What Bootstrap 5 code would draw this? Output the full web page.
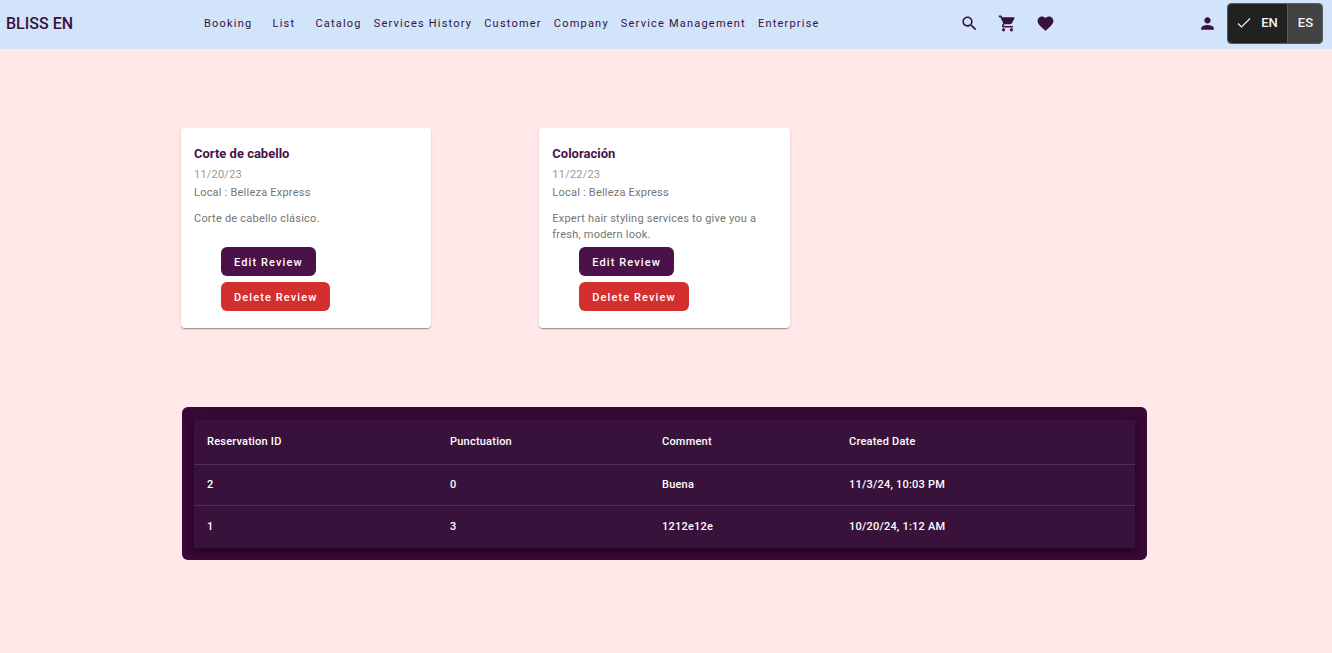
<!DOCTYPE html>
<html lang="en">
<head>
<meta charset="utf-8">
<meta name="viewport" content="width=device-width, initial-scale=1">
<title>Bliss</title>
<link href="https://cdn.jsdelivr.net/npm/bootstrap@5.3.0/dist/css/bootstrap.min.css" rel="stylesheet">
<style>
  :root { --plum: #38123b; --grape: #4b1149; }
  body { font-family: Roboto, "Liberation Sans", sans-serif; font-size: 11px; line-height: 16px; background: #ffe8e7; color: var(--plum); }
  .topbar { background: #d2e4fa; min-height: 49px; padding: 3px 9px 5px 6px; }
  .topbar a, .tool { color: var(--plum); }
  .brand { font-size: 16px; line-height: 24px; font-weight: 500; width: 192px; }
  .menu-link { min-width: 51px; padding: 6px; text-align: center; letter-spacing: 0.11em; }
  .tool { width: 38px; height: 38px; padding: 0 0 2px; border: 0; }
  .tools-main { margin-right: 124px; }
  .account { margin-right: 1px; }
  .lang { border: 1px solid #5b5b5b; border-radius: 4px; overflow: hidden; height: 41px; }
  .lang button { border: 0; background: #424242; color: #f5f5f5; font-size: 13px; font-weight: 500; padding: 0 9px 2px 10px; }
  .lang button.chosen { background: #212121; border-right: 1px solid #5b5b5b; gap: 10px; padding-left: 9px; }
  .page { padding: 79px 184px 24px 181px; }
  .reviews { --bs-gutter-x: 108px; --bs-gutter-y: 24px; margin-bottom: 79px; }
  .review { min-height: 200px; padding: 17px 13px; border: 0; border-radius: 4px; color: #757575; letter-spacing: 0.02em;
    box-shadow: 0 2px 1px -1px rgba(0,0,0,.2), 0 1px 1px rgba(0,0,0,.14), 0 1px 3px rgba(0,0,0,.12); }
  .review h2 { font-size: 13px; line-height: 18px; font-weight: 700; color: var(--grape); margin-bottom: 4px; letter-spacing: 0; }
  .review time { color: #999; line-height: 16px; margin-bottom: 2px; }
  .place { margin-bottom: 10px; }
  .about { min-height: 32px; margin-bottom: 4px; }
  .actions { gap: 6px; padding-left: 27px; }
  .act { font-size: 11px; line-height: 17px; font-weight: 500; letter-spacing: 0.1em; color: #fff; border: 0; border-radius: 6px; padding: 7px 13px 5px; }
  .act-edit { background: var(--grape); }
  .act-delete { background: #d32f2f; }
  .panel { background: #380836; border-radius: 6px; padding: 13px 12px 12px; margin: 0 1px; }
  .log { color: #fff; background: var(--plum); letter-spacing: 0.02em; box-shadow: 0 4px 4px -2px rgba(0,0,0,.2), 0 5px 6px rgba(0,0,0,.14), 0 1px 11px rgba(0,0,0,.12); table-layout: fixed; }
  .log th, .log td { padding: 0 13px; height: 41px; font-weight: 500; border-bottom: 1px solid #523056; }
  .log td { padding-top: 1px; }
  .log th { height: 44px; }
  .log tbody tr:last-child td { border: 0; height: 43px; }
  .c-id { width: 243px; } .c-score { width: 212px; } .c-note { width: 187px; }
  @media (max-width: 991px) { .page { padding: 32px 24px; } .tools-main { margin-right: 0; } .brand, .log th { width: auto; } }
</style>
</head>
<body>
<header class="topbar d-flex flex-wrap align-items-center">
  <a class="brand text-decoration-none" href="#">BLISS EN</a>
  <nav class="d-flex flex-wrap" aria-label="Main">
    <a class="menu-link text-decoration-none" href="#">Booking</a>
    <a class="menu-link text-decoration-none" href="#">List</a>
    <a class="menu-link text-decoration-none" href="#">Catalog</a>
    <a class="menu-link text-decoration-none" href="#">Services History</a>
    <a class="menu-link text-decoration-none" href="#">Customer</a>
    <a class="menu-link text-decoration-none" href="#">Company</a>
    <a class="menu-link text-decoration-none" href="#">Service Management</a>
    <a class="menu-link text-decoration-none" href="#">Enterprise</a>
  </nav>
  <div class="tools-main d-flex ms-auto">
    <button class="tool btn" aria-label="Search"><svg width="19" height="19" viewBox="0 0 24 24" fill="currentColor"><path d="M15.5 14h-.79l-.28-.27C15.41 12.59 16 11.11 16 9.5 16 5.91 13.09 3 9.5 3S3 5.91 3 9.5 5.91 16 9.5 16c1.61 0 3.09-.59 4.23-1.57l.27.28v.79l5 4.99L20.49 19l-4.99-5zm-6 0C7.01 14 5 11.99 5 9.5S7.01 5 9.5 5 14 7.01 14 9.5 11.99 14 9.5 14z"/></svg></button>
    <button class="tool btn" aria-label="Cart"><svg width="19" height="19" viewBox="0 0 24 24" fill="currentColor"><path d="M7 18c-1.1 0-1.99.9-1.99 2S5.9 22 7 22s2-.9 2-2-.9-2-2-2zM1 2v2h2l3.6 7.59-1.35 2.45c-.16.28-.25.61-.25.96 0 1.1.9 2 2 2h12v-2H7.42c-.14 0-.25-.11-.25-.25l.03-.12.9-1.63h7.45c.75 0 1.41-.41 1.75-1.03l3.58-6.49c.08-.14.12-.31.12-.48 0-.55-.45-1-1-1H5.21l-.94-2H1zm16 16c-1.1 0-1.99.9-1.99 2s.89 2 1.99 2 2-.9 2-2-.9-2-2-2z"/></svg></button>
    <button class="tool btn" aria-label="Favorites"><svg width="19" height="19" viewBox="0 0 24 24" fill="currentColor"><path d="M12 21.35l-1.45-1.32C5.4 15.36 2 12.28 2 8.5 2 5.42 4.42 3 7.5 3c1.74 0 3.41.81 4.5 2.09C13.09 3.81 14.76 3 16.5 3 19.58 3 22 5.42 22 8.5c0 3.78-3.4 6.86-8.55 11.54L12 21.35z"/></svg></button>
  </div>
  <button class="tool account btn" aria-label="Account"><svg width="19" height="19" viewBox="0 0 24 24" fill="currentColor"><path d="M12 12c2.21 0 4-1.79 4-4s-1.79-4-4-4-4 1.79-4 4 1.79 4 4 4zm0 2c-2.67 0-8 1.34-8 4v2h16v-2c0-2.66-5.33-4-8-4z"/></svg></button>
  <div class="lang d-flex" role="group" aria-label="Language">
    <button class="chosen d-flex align-items-center" aria-pressed="true"><svg width="14" height="14" viewBox="0 0 14 14" fill="none" stroke="currentColor" stroke-width="1.1"><path d="M1 7.5 4.5 11 13 2.5"/></svg>EN</button>
    <button aria-pressed="false">ES</button>
  </div>
</header>

<main class="page">
  <section class="reviews row row-cols-1 row-cols-lg-3">
    <div class="col">
      <article class="review card">
        <h2>Corte de cabello</h2>
        <time datetime="2023-11-20">11/20/23</time>
        <p class="place">Local : Belleza Express</p>
        <p class="about">Corte de cabello clásico.</p>
        <div class="actions d-flex flex-column align-items-start">
          <button class="act act-edit">Edit Review</button>
          <button class="act act-delete">Delete Review</button>
        </div>
      </article>
    </div>
    <div class="col">
      <article class="review card">
        <h2>Coloración</h2>
        <time datetime="2023-11-22">11/22/23</time>
        <p class="place">Local : Belleza Express</p>
        <p class="about">Expert hair styling services to give you a fresh, modern look.</p>
        <div class="actions d-flex flex-column align-items-start">
          <button class="act act-edit">Edit Review</button>
          <button class="act act-delete">Delete Review</button>
        </div>
      </article>
    </div>
  </section>

  <section class="panel">
    <table class="log w-100">
      <thead>
        <tr><th class="c-id" scope="col">Reservation ID</th><th class="c-score" scope="col">Punctuation</th><th class="c-note" scope="col">Comment</th><th scope="col">Created Date</th></tr>
      </thead>
      <tbody>
        <tr><td>2</td><td>0</td><td>Buena</td><td>11/3/24, 10:03 PM</td></tr>
        <tr><td>1</td><td>3</td><td>1212e12e</td><td>10/20/24, 1:12 AM</td></tr>
      </tbody>
    </table>
  </section>
</main>
<script src="https://cdn.jsdelivr.net/npm/bootstrap@5.3.0/dist/js/bootstrap.bundle.min.js"></script>
</body>
</html>
